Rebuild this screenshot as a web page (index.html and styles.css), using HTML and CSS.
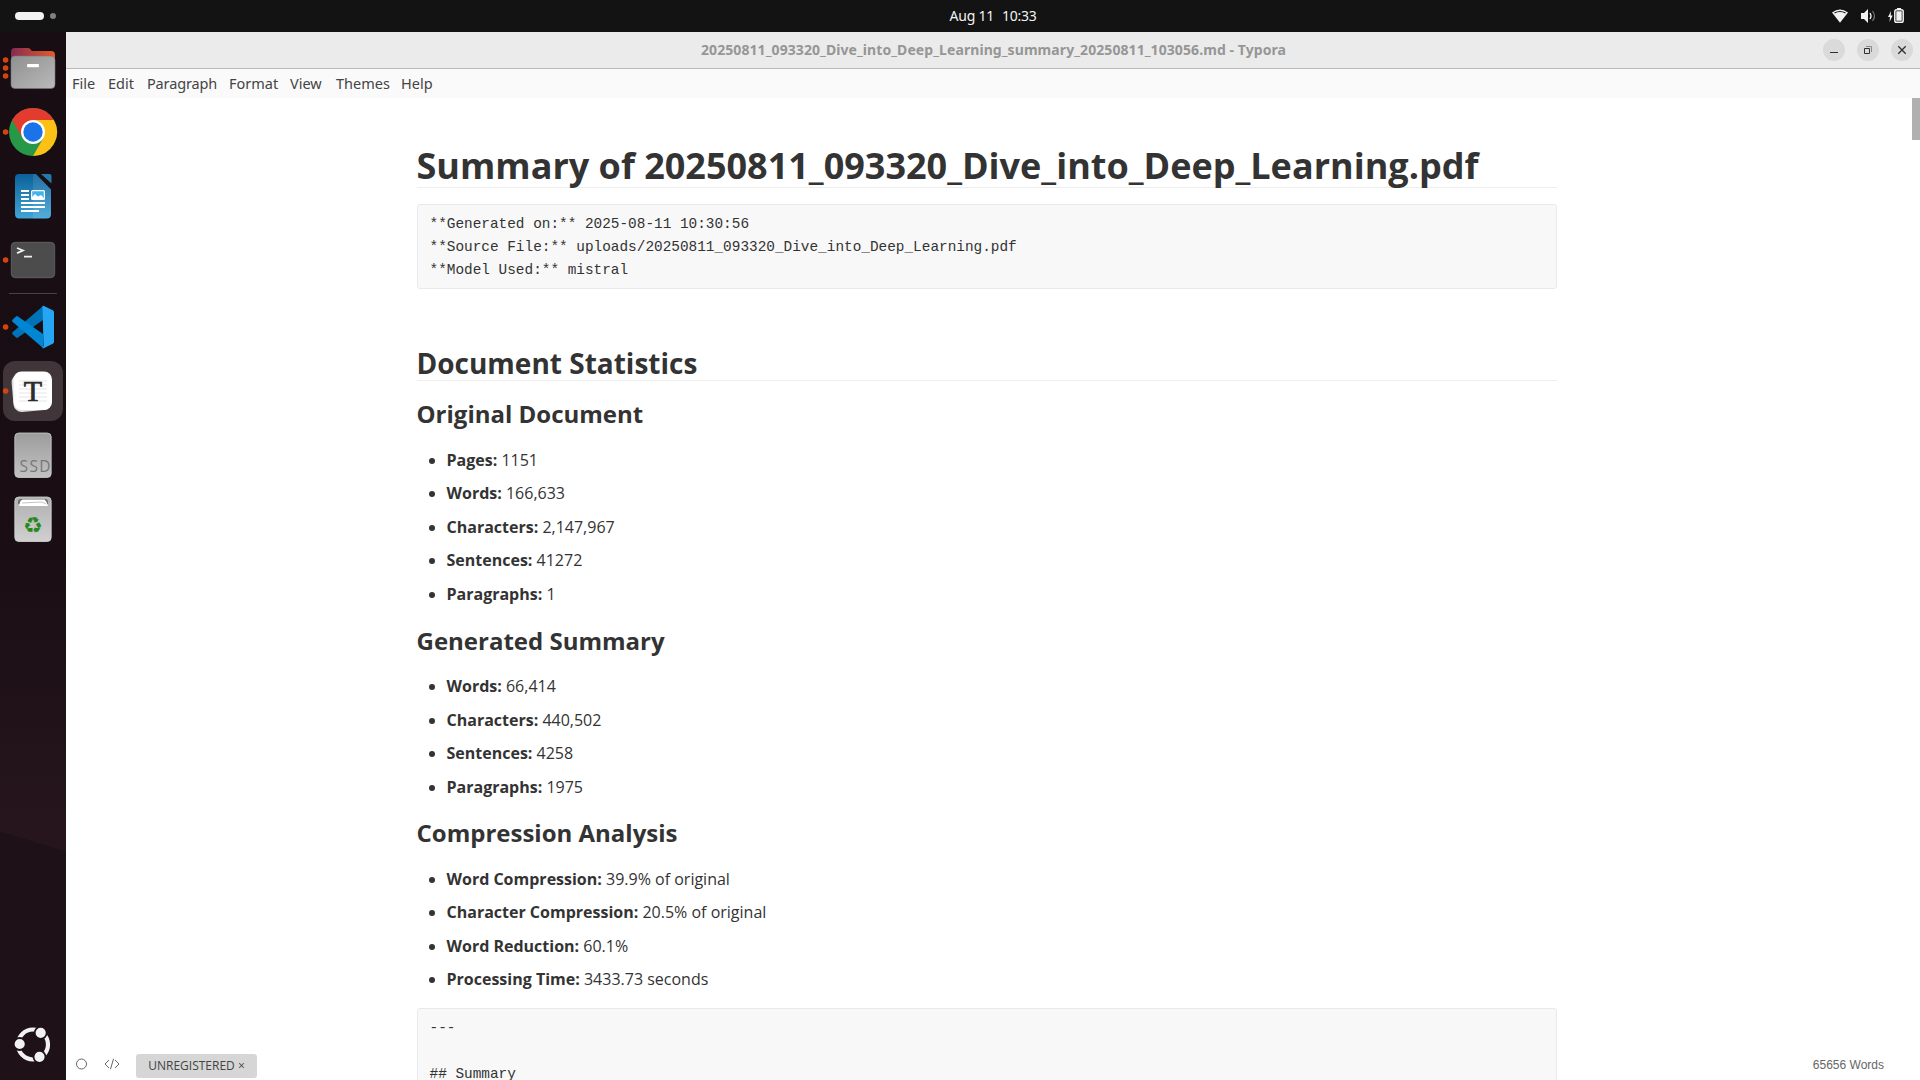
FILE: index.html
```html
<!DOCTYPE html>
<html lang="en">
<head>
<meta charset="utf-8">
<title>Typora</title>
<link rel="stylesheet" href="styles.css">
</head>
<body>
<header class="topbar">
  <div class="workspaces"><span class="ws-active"></span><span class="ws-dot"></span></div>
  <div class="clock"><span>Aug 11</span><span>10:33</span></div>
  <svg class="tray" width="88" height="32" viewBox="1832 0 88 32">
    <path d="M1832 12.5Q1840 6.500 1848 12.500L1840 22.800Z" fill="#f2f2f2"/>
    <path d="M1834.500 13Q1840 10 1845.500 13" fill="none" stroke="#131313" stroke-width="1.200"/>
    <path d="M1861 13h3l4-4v14l-4-4h-3z" fill="#f2f2f2"/>
    <path d="M1870 13q2 3 0 6" fill="none" stroke="#f2f2f2" stroke-width="1.300"/>
    <path d="M1872.500 11q4 5 0 10" fill="none" stroke="#777" stroke-width="1.200"/>
    <path d="M1891 11l-3 6h2l-.5 5 3.200-6.500h-2z" fill="#f2f2f2"/>
    <rect x="1894.800" y="9.800" width="8.400" height="12.400" rx="1.800" fill="none" stroke="#f2f2f2" stroke-width="1.500"/>
    <path d="M1897 8h4v1.500h-4zM1896.300 11.300h5.400v9.400h-5.400z" fill="#f2f2f2"/>
  </svg>
</header>
<div class="desktop">
  <nav class="dock">
    <svg class="app" viewBox="0 36 66 64">
      <defs>
        <linearGradient id="fb"><stop offset="0" stop-color="#832b52"/><stop offset="1" stop-color="#e95a28"/></linearGradient>
        <linearGradient id="ff" x2="1" y2="1"><stop offset="0" stop-color="#8f8f8f"/><stop offset="1" stop-color="#bababa"/></linearGradient>
      </defs>
      <g fill="#d3450f"><circle cx="5.600" cy="60" r="2.800"/><circle cx="5.600" cy="68" r="2.800"/><circle cx="5.600" cy="76" r="2.800"/></g>
      <path d="M11 65V52q0-4 4-4h13q2 0 3 2l1 1h19q4 0 4 4v10z" fill="url(#fb)"/>
      <rect x="11" y="56" width="44" height="32.500" rx="4" fill="url(#ff)" stroke="#777" stroke-width=".6"/>
      <rect x="27" y="64" width="12" height="3.200" rx="1" fill="#fff"/>
    </svg>
    <svg class="app" viewBox="0 100 66 64">
      <circle cx="5.600" cy="132" r="2.800" fill="#d3450f"/>
      <circle cx="33" cy="132" r="24" fill="#279847"/>
      <path d="M12.200 120A24 24 0 0 1 53.800 120H33L22.600 138Z" fill="#e33b2e"/>
      <path d="M53.800 120A24 24 0 0 1 33 156L43.400 138L33 120Z" fill="#fdc014"/>
      <circle cx="33" cy="132" r="12" fill="#fff"/><circle cx="33" cy="132" r="9.700" fill="#1a73e8"/>
    </svg>
    <svg class="app" viewBox="0 164 66 64">
      <defs><linearGradient id="wr" x2="0" y2="1"><stop offset="0" stop-color="#0b6199"/><stop offset="1" stop-color="#40a5d7"/></linearGradient></defs>
      <path d="M19 174h17l15 15.500V214q0 4.500-4.500 4.500h-27q-4.500 0-4.500-4.500V178q0-4 4-4z" fill="url(#wr)"/>
      <path d="M33 174h3l15 15.500V214q0 4.500-4.500 4.500H33z" fill="#fff" opacity=".1"/>
      <path d="M41 174h8.500q2 0 2 2v7.500z" fill="#2678a9"/>
      <path d="M21 191h8M21 195h8M21 199h8M21 203h24M21 207h24M21 211h18" stroke="#fff" stroke-width="2"/>
      <rect x="31.600" y="190.600" width="12.800" height="8.800" rx="1" fill="#46b4ea" stroke="#fff" stroke-width="1.200"/>
      <path d="M32 199v-2l3-3 3 2.500 3-1.500 3 3v1z" fill="#fff"/>
    </svg>
    <svg class="app" viewBox="0 228 66 64">
      <circle cx="5.600" cy="260" r="2.800" fill="#d3450f"/>
      <rect x="11.300" y="242.300" width="43.400" height="35.400" rx="4" fill="#4c4c4c" stroke="#686868" stroke-width=".8"/>
      <path d="M17 248l6 2.500-6 2.600M24 256.700h8" fill="none" stroke="#f2f2f2" stroke-width="1.700"/>
    </svg>
    <div class="dock-line"></div>
    <svg class="app" viewBox="0 295 66 64">
      <circle cx="5.600" cy="327" r="2.800" fill="#d3450f"/>
      <path d="M43 306v14L18 337.500q-1 .8-2 0L12.500 334.300q-1-1 0-2z" fill="#0072b8"/>
      <path d="M43 348v-14L18 316.500q-1-.8-2 0L12.500 319.700q-1 1 0 2z" fill="#0086d3"/>
      <path d="M42.500 306q.8-.4 1.500 0l8.700 4.200q1.300.7 1.300 2v29.600q0 1.300-1.300 2L44 348q-.7.4-1.500 0l1-2z" fill="#25a6f2"/>
    </svg>
    <svg class="app" viewBox="0 359 66 64">
      <rect x="3" y="361" width="60" height="60" rx="12" fill="#403639"/>
      <circle cx="5.600" cy="391" r="2.800" fill="#d3450f"/>
      <rect x="12.500" y="373" width="38" height="38" rx="8" fill="#dcdcdc" transform="rotate(-5 32 392)"/>
      <rect x="13.500" y="371.500" width="38.500" height="38.500" rx="8" fill="#fff"/>
      <path d="M19 381h28M19 385h28M19 389h28M19 393h28M19 397h28M19 401h28" stroke="#eee" stroke-width="1.500"/>
      <text x="33" y="401" class="logo-t">T</text>
    </svg>
    <svg class="app" viewBox="0 423 66 64">
      <defs><linearGradient id="sd" x2="0" y2="1"><stop offset="0" stop-color="#9c9c9c"/><stop offset="1" stop-color="#c2c2c2"/></linearGradient></defs>
      <rect x="14.800" y="433" width="36.400" height="44.500" rx="4" fill="url(#sd)" stroke="#ccc" stroke-width=".8"/>
      <text x="19.500" y="472" class="logo-ssd" textLength="31">SSD</text>
    </svg>
    <svg class="app" viewBox="0 487 66 64">
      <defs><linearGradient id="tr" x2="0" y2="1"><stop offset="0" stop-color="#b0b0b0"/><stop offset="1" stop-color="#d0d0d0"/></linearGradient></defs>
      <rect x="14.800" y="497" width="36.400" height="44.500" rx="4" fill="url(#tr)" stroke="#d6d6d6" stroke-width=".8"/>
      <path d="M18 504v-2q0-3 3-3h24q3 0 3 3v2z" fill="#707070"/>
      <path d="M19 506l1.500-5 2-1.500h22l2 2.500 1.500 4z" fill="#fff"/>
      <path d="M22 503l20-1 4 2" fill="none" stroke="#aaa" stroke-width=".7"/>
      <text x="33" y="533" class="logo-recycle">♻</text>
    </svg>
    <svg class="app launcher" viewBox="0 1013 66 64">
      <circle cx="33" cy="1044.500" r="15" fill="none" stroke="#f2f2f2" stroke-width="4.200"/>
      <g fill="#f2f2f2" stroke="#1e1218" stroke-width="1.800"><circle cx="19.700" cy="1044" r="6"/><circle cx="40.700" cy="1032.800" r="6"/><circle cx="39.500" cy="1056.800" r="6"/></g>
    </svg>
  </nav>
  <section class="window">
    <div class="titlebar">
      <div class="title">20250811_093320_Dive_into_Deep_Learning_summary_20250811_103056.md - Typora</div>
      <div class="controls">
        <svg width="22" height="22"><circle cx="11" cy="11" r="11" fill="#dadada"/><path d="M7 13.500h8" stroke="#2f2f2f"/></svg>
        <svg width="22" height="22"><circle cx="11" cy="11" r="11" fill="#dadada"/><path d="M7.500 9.500h5v5h-5z" fill="none" stroke="#2f2f2f"/><path d="M9 7.500h5.500V13" fill="none" stroke="#888"/></svg>
        <svg width="22" height="22"><circle cx="11" cy="11" r="11" fill="#dadada"/><path d="M7.300 7.300l7.400 7.400M14.700 7.300l-7.400 7.400" stroke="#2f2f2f" stroke-width="1.300"/></svg>
      </div>
    </div>
    <div class="menu"><span class="m-file">File</span><span class="m-edit">Edit</span><span class="m-par">Paragraph</span><span class="m-format">Format</span><span class="m-view">View</span><span class="m-themes">Themes</span><span>Help</span></div>
    <div class="editor">
      <article class="write">
        <h1>Summary of 20250811_093320_Dive_into_Deep_Learning.pdf</h1>
        <pre class="meta">**Generated on:** 2025-08-11 10:30:56
**Source File:** uploads/20250811_093320_Dive_into_Deep_Learning.pdf
**Model Used:** mistral</pre>
        <h2>Document Statistics</h2>
        <h3>Original Document</h3>
        <ul>
          <li><strong>Pages:</strong> 1151</li>
          <li><strong>Words:</strong> 166,633</li>
          <li><strong>Characters:</strong> 2,147,967</li>
          <li><strong>Sentences:</strong> 41272</li>
          <li><strong>Paragraphs:</strong> 1</li>
        </ul>
        <h3>Generated Summary</h3>
        <ul>
          <li><strong>Words:</strong> 66,414</li>
          <li><strong>Characters:</strong> 440,502</li>
          <li><strong>Sentences:</strong> 4258</li>
          <li><strong>Paragraphs:</strong> 1975</li>
        </ul>
        <h3>Compression Analysis</h3>
        <ul>
          <li><strong>Word Compression:</strong> 39.9% of original</li>
          <li><strong>Character Compression:</strong> 20.5% of original</li>
          <li><strong>Word Reduction:</strong> 60.1%</li>
          <li><strong>Processing Time:</strong> 3433.73 seconds</li>
        </ul>
        <pre>---

## Summary
</pre>
      </article>
      <div class="scrollthumb"></div>
    </div>
    <footer class="status">
      <svg width="44" height="12" viewBox="0 0 44 12"><circle cx="5.500" cy="6" r="5" fill="none" stroke="#666"/><path d="M33 2l-4 4 4 4M39 2l4 4-4 4M37.500 .8l-3 10.400" fill="none" stroke="#666"/></svg>
      <span class="badge">UNREGISTERED ×</span>
      <span class="words">65656 Words</span>
    </footer>
  </section>
</div>
</body>
</html>
```
FILE: styles.css
```css
* { box-sizing: border-box; }
body { margin: 0; width: 1920px; height: 1080px; overflow: hidden; display: flex; flex-direction: column; background: #fff; font-family: "Open Sans", sans-serif; color: #333; }
.topbar { height: 32px; flex: none; background: #131313; color: #f2f2f2; display: grid; grid-template-columns: 1fr auto 1fr; align-items: center; }
.workspaces { display: flex; align-items: center; gap: 6px; padding-left: 15px; }
.ws-active { width: 29px; height: 8px; border-radius: 4px; background: #f2f2f2; }
.ws-dot { width: 6px; height: 6px; border-radius: 50%; background: #808080; }
.clock { display: flex; gap: 8px; margin-left: 66px; padding-bottom: 2px; font: 14px "Noto Sans", sans-serif; letter-spacing: -.25px; white-space: nowrap; }
.tray { justify-self: end; }
.desktop { flex: 1; display: flex; min-height: 0; }
.dock { width: 66px; flex: none; padding-top: 4px; display: flex; flex-direction: column;
  background: linear-gradient(197deg, transparent 783px, #1e1218 784px), linear-gradient(#170d13, #1a0e14 50%, #26151d 76%); }
.app { display: block; width: 66px; height: 64px; flex: none; }
.dock-line { width: 48px; height: 1px; margin: 1px 9px; background: #4a4246; flex: none; }
.launcher { margin-top: auto; margin-bottom: 3px; }
.logo-t { font: 30px "Liberation Serif", serif; text-anchor: middle; fill: #2c2c2c; stroke: #2c2c2c; stroke-width: .7px; }
.logo-ssd { font: 15.5px "Open Sans", sans-serif; fill: #777; }
.logo-recycle { font: 22px "DejaVu Sans", sans-serif; text-anchor: middle; fill: #26891b; }
.window { flex: 1; min-width: 0; position: relative; display: flex; flex-direction: column; }
.titlebar { height: 37px; flex: none; background: #ebebeb; border-bottom: 1px solid #b9b9b9; display: flex; align-items: center; }
.title { flex: 1; padding: 0 0 2px 635px; font: bold 14px "Noto Sans", sans-serif; letter-spacing: .08px; color: #969696; white-space: nowrap; }
.controls { display: flex; gap: 12px; padding-right: 7px; }
.menu { height: 29px; flex: none; background: #fafafa; display: flex; align-items: center; padding: 0 0 2px 6px; font: 14.500px "Noto Sans", sans-serif; color: #444; }
.m-file { width: 36px; } .m-edit { width: 39px; } .m-par { width: 82px; letter-spacing: -.15px; } .m-format { width: 61px; } .m-view { width: 46px; } .m-themes { width: 65px; }
.editor { flex: 1; min-height: 0; overflow: hidden; display: flex; justify-content: space-between; }
.write { width: 1140.500px; margin-left: 350.500px; padding-top: 46px; font-size: 16px; line-height: 1.6; }
.scrollthumb { width: 8px; height: 42px; background: #b0b0b0; }
h1, h2, h3, ul, pre { margin: 0 0 16px; }
h1 { font-size: 36px; line-height: 43.200px; border-bottom: 1px solid #eee; }
h2 { font-size: 28px; line-height: 34.300px; border-bottom: 1px solid #eee; }
h3 { font-size: 24px; line-height: 34.300px; }
pre { font: 14.400px/23px "Liberation Mono", monospace; background: #f8f8f8; border: 1px solid #e7eaed; border-radius: 3px; padding: 8px 12px 6px; }
.meta { margin-bottom: 56.850px; }
ul { padding-left: 30px; }
ul:last-of-type { margin-bottom: 15.150px; }
li + li { margin-top: 8px; }
.status { position: absolute; left: 0; right: 0; bottom: 2px; height: 24px; padding: 0 36px 0 10px; display: flex; align-items: center; font-size: 12px; }
.status svg { margin-top: -4px; }
.badge { width: 121px; height: 24px; margin-left: 16px; line-height: 23px; border-radius: 3px; background: #d6d6d6; text-align: center; color: #444; }
.words { margin-left: auto; margin-top: -3px; font: 12px "Liberation Sans", sans-serif; color: #666; }
```
